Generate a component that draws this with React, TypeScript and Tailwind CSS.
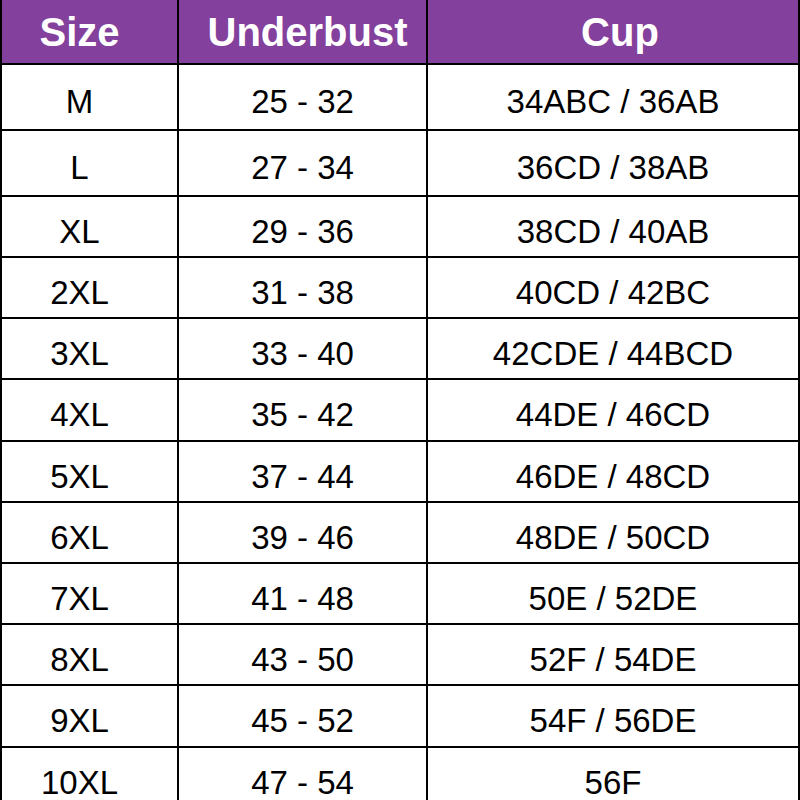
import React from "react";

const rows: [string, string, string, string][] = [
  ["M", "25 - 32", "34ABC / 36AB", "h-[66px]"],
  ["L", "27 - 34", "36CD / 38AB", "h-[66px]"],
  ["XL", "29 - 36", "38CD / 40AB", "h-[61px]"],
  ["2XL", "31 - 38", "40CD / 42BC", "h-[61px]"],
  ["3XL", "33 - 40", "42CDE / 44BCD", "h-[61px]"],
  ["4XL", "35 - 42", "44DE / 46CD", "h-[62px]"],
  ["5XL", "37 - 44", "46DE / 48CD", "h-[61px]"],
  ["6XL", "39 - 46", "48DE / 50CD", "h-[61px]"],
  ["7XL", "41 - 48", "50E / 52DE", "h-[61px]"],
  ["8XL", "43 - 50", "52F / 54DE", "h-[61px]"],
  ["9XL", "45 - 52", "54F / 56DE", "h-[62px]"],
  ["10XL", "47 - 54", "56F", "h-[61px]"],
];

export default function App() {
  return (
    <div
      className="w-[800px] h-[800px] overflow-hidden bg-white"
      style={{ fontFamily: '"Liberation Sans", Arial, sans-serif' }}
    >
      <div className="flex flex-col border-l-2 border-black">
        <div className="flex h-[65px] bg-[#83409c] border-b-2 border-black text-white font-bold text-[40px] leading-none">
          <div className="w-[177px] flex items-center justify-center pr-[20px] border-r-2 border-black">
            Size
          </div>
          <div className="w-[249px] flex items-center justify-center pl-[10px] border-r-2 border-black">
            Underbust
          </div>
          <div className="w-[372px] flex items-center justify-center pl-[14px] border-r-2 border-black">
            Cup
          </div>
        </div>
        {rows.map(([s, u, c, h]) => (
          <div
            key={s}
            className={`flex ${h} shrink-0 border-b-2 border-black text-black text-[33px] leading-none`}
          >
            <div className="w-[177px] flex items-center justify-center pr-[20px] pt-[9px] border-r-2 border-black">
              {s}
            </div>
            <div className="w-[249px] flex items-center justify-center pt-[9px] border-r-2 border-black">
              {u}
            </div>
            <div className="w-[372px] flex items-center justify-center pt-[9px] border-r-2 border-black">
              {c}
            </div>
          </div>
        ))}
      </div>
    </div>
  );
}
